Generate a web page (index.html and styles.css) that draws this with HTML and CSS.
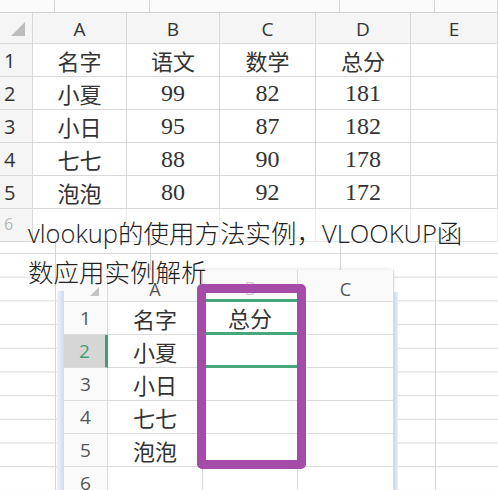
FILE: index.html
```html
<!DOCTYPE html>
<html lang="zh-CN">
<head>
<meta charset="utf-8">
<link rel="stylesheet" href="styles.css">
</head>
<body>
<div class="page">
  <div class="strip">
    <div></div><div></div><div></div><div></div><div></div>
  </div>

  <div class="sheet1">
    <div class="hd corner"><span class="tri"></span></div>
    <div class="hd col">A</div><div class="hd col">B</div><div class="hd col">C</div><div class="hd col">D</div><div class="hd col">E</div>

    <div class="hd rn">1</div><div class="c cjk">名字</div><div class="c cjk">语文</div><div class="c cjk">数学</div><div class="c cjk">总分</div><div class="c"></div>
    <div class="hd rn">2</div><div class="c cjk">小夏</div><div class="c num">99</div><div class="c num">82</div><div class="c num">181</div><div class="c"></div>
    <div class="hd rn">3</div><div class="c cjk">小日</div><div class="c num">95</div><div class="c num">87</div><div class="c num">182</div><div class="c"></div>
    <div class="hd rn">4</div><div class="c cjk">七七</div><div class="c num">88</div><div class="c num">90</div><div class="c num">178</div><div class="c"></div>
    <div class="hd rn">5</div><div class="c cjk">泡泡</div><div class="c num">80</div><div class="c num">92</div><div class="c num">172</div><div class="c"></div>
    <div class="hd rn faded">6</div><div class="c faint"></div><div class="c faint"></div><div class="c faint"></div><div class="c faint"></div><div class="c faint"></div>
  </div>

  <div class="lower"></div>

  <div class="panel">
    <div class="sheet2">
      <div class="h2 corner2"><span class="tri small"></span></div>
      <div class="h2 col2">A</div><div class="h2 col2 colb">B</div><div class="h2 col2">C</div>

      <div class="h2 rn2">1</div><div class="d cjk2">名字</div><div class="d cjk2 sel">总分</div><div class="d"></div>
      <div class="h2 rn2 active">2</div><div class="d cjk2">小夏</div><div class="d sel"></div><div class="d"></div>
      <div class="h2 rn2">3</div><div class="d cjk2">小日</div><div class="d"></div><div class="d"></div>
      <div class="h2 rn2">4</div><div class="d cjk2">七七</div><div class="d"></div><div class="d"></div>
      <div class="h2 rn2">5</div><div class="d cjk2">泡泡</div><div class="d"></div><div class="d"></div>
      <div class="h2 rn2">6</div><div class="d"></div><div class="d"></div><div class="d"></div>
    </div>
  </div>

  <div class="highlight"></div>

  <h1 class="title">vlookup的使用方法实例，VLOOKUP函<br>数应用实例解析</h1>
</div>
</body>
</html>
```

FILE: styles.css
```css
* { box-sizing: border-box; }
html, body { margin: 0; padding: 0; background: #fff; }
.page {
  position: relative;
  width: 498px;
  height: 490px;
  overflow: hidden;
  background: #fff;
}

/* top strip */
.strip {
  display: grid;
  grid-template-columns: 55px 95px 190px 95px 63px;
  height: 13px;
  background: #fbfbfb;
  border-bottom: 1px solid #cfcfcf;
}
.strip div { border-right: 1px solid #d6d6d6; }

/* first sheet */
.sheet1 {
  display: grid;
  grid-template-columns: 33px 94px 93px 96px 95px 87px;
  grid-template-rows: 31px repeat(6, 33px);
}
.sheet1 > div {
  border-right: 1px solid #d9d9d9;
  border-bottom: 1px solid #d9d9d9;
  display: flex;
  align-items: center;
  justify-content: center;
  color: #333;
}
.hd { background: #f5f5f5; color: #444; }
.col {
  font-family: "Open Sans", "Liberation Sans", sans-serif;
  font-size: 19px;
  padding-top: 2px;
}
.rn {
  font-family: "Open Sans", "Liberation Sans", sans-serif;
  font-size: 20px;
  justify-content: flex-start !important;
  padding-left: 4px;
}
.corner { position: relative; }
.tri {
  position: absolute;
  right: 7px;
  bottom: 7px;
  width: 0;
  height: 0;
  border-left: 14px solid transparent;
  border-bottom: 14px solid #bdbdbd;
}
.tri.small {
  right: 8px;
  bottom: 5px;
  border-left-width: 9px;
  border-bottom-width: 9px;
  border-bottom-color: #c4c4c4;
}
.cjk {
  font-family: "Noto Sans CJK SC", sans-serif;
  font-size: 22px;
}
.num {
  font-family: "Liberation Serif", serif;
  font-size: 24px;
  color: #333;
}
.faded { color: #b5b5b5 !important; font-size: 16px !important; align-items: flex-start !important; padding-top: 4px; }
.faint { border-right-color: #ececec !important; border-bottom-color: #e4e4e4 !important; }

/* lower background grid */
.lower {
  height: 248px;
  background-image:
    linear-gradient(#d8d8d8, #d8d8d8),
    linear-gradient(#d8d8d8, #d8d8d8),
    linear-gradient(#d8d8d8, #d8d8d8),
    linear-gradient(#d8d8d8, #d8d8d8),
    linear-gradient(to bottom, #dadada 0, #dadada 1px, transparent 1px);
  background-size: 1px 100%, 1px 100%, 1px 100%, 1px 100%, 100% 23.7px;
  background-position: 55px 0, 150px 0, 340px 0, 435px 0, 0 11px;
  background-repeat: no-repeat, no-repeat, no-repeat, no-repeat, repeat-y;
}

/* inner sheet window */
.panel {
  position: absolute;
  left: 64px;
  top: 270px;
  width: 330px;
  height: 220px;
  background: #fff;
  border-radius: 6px 6px 0 0;
  box-shadow: 0 -1px 4px rgba(0,0,0,0.10);
}
.panel::before {
  content: "";
  position: absolute;
  left: -7px;
  top: 21px;
  bottom: 0;
  width: 7px;
  background: linear-gradient(to right, #eef3fa, #c9dcf1);
}
.panel::after {
  content: "";
  position: absolute;
  right: -4px;
  top: 22px;
  bottom: 0;
  width: 4px;
  background: linear-gradient(to right, #c6d9ef, #e8f0f9);
}
.sheet2 {
  display: grid;
  grid-template-columns: 44px 95px 95px 96px;
  grid-template-rows: 32px repeat(6, 33px);
}
.sheet2 > div {
  border-right: 1px solid #dcdcdc;
  border-bottom: 1px solid #dcdcdc;
  display: flex;
  align-items: center;
  justify-content: center;
  color: #333;
}
.h2 { background: #fafafa; color: #555; }
.corner2 { position: relative; border-top-left-radius: 6px; }
.col2 {
  font-family: "Open Sans", "Liberation Sans", sans-serif;
  font-size: 18px;
  color: #555 !important;
  padding-top: 6px;
}
.colb { color: #d8c6da !important; border-bottom: 3px solid #48a67c !important; }
.rn2 {
  font-family: "Open Sans", "Liberation Sans", sans-serif;
  font-size: 19px;
  color: #555 !important;
}
.rn2.active {
  background: #d6d6d6;
  color: #3f9f73 !important;
  border-right: 3px solid #3f9f73 !important;
}
.cjk2 {
  font-family: "Noto Sans CJK SC", sans-serif;
  font-size: 22px;
}
.sel { border-bottom: 3px solid #48a67c !important; }

/* purple annotation box */
.highlight {
  position: absolute;
  left: 197px;
  top: 284px;
  width: 109px;
  height: 185px;
  border: 9px solid #a54ca8;
  border-radius: 5px;
}

/* overlaid caption */
.title {
  position: absolute;
  left: 28px;
  top: 214px;
  margin: 0;
  font-family: "Open Sans", "Noto Sans CJK SC", sans-serif;
  font-weight: 300;
  font-size: 25.5px;
  line-height: 39px;
  color: #222;
  white-space: nowrap;
}
```
